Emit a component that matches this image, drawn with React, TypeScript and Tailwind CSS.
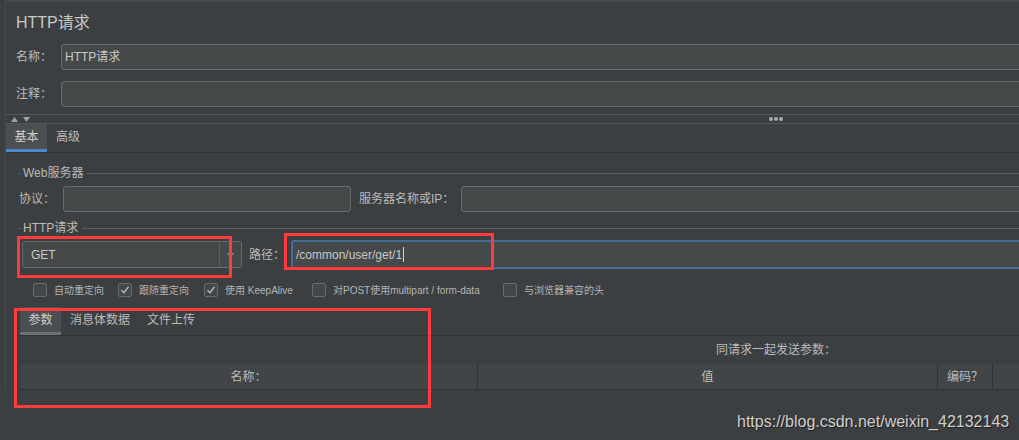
import React from "react";

const CHECKS = [
  { label: "自动重定向", checked: false, w: "w-[85px]" },
  { label: "跟随重定向", checked: true, w: "w-[86px]" },
  { label: "使用 KeepAlive", checked: true, w: "w-[108px]" },
  { label: "对POST使用multipart / form-data", checked: false, w: "w-[191px]" },
  { label: "与浏览器兼容的头", checked: false, w: "w-[120px]" },
];

function CheckBox({ checked }: { checked: boolean }) {
  return (
    <span className="flex h-[14px] w-[14px] shrink-0 items-center justify-center rounded-[2px] border border-[#6b6b6b] bg-[#43474a]">
      {checked && (
        <svg width="10" height="10" viewBox="0 0 10 10" fill="none">
          <path d="M1.5 5.2 L4 7.8 L8.6 1.8" stroke="#b8b8b8" strokeWidth="1.4" />
        </svg>
      )}
    </span>
  );
}

function GroupTitle({ title }: { title: string }) {
  return (
    <div className="flex h-[20px] items-center">
      <div className="h-px w-[3px] bg-[#5b5e60]" />
      <span className="ml-[2px] mr-[4px] text-[12px] text-[#bbbbbb]">{title}</span>
      <div className="h-px flex-1 bg-[#5b5e60]" />
    </div>
  );
}

export default function App() {
  return (
    <div className="relative h-[440px] w-[1019px] overflow-hidden bg-[#3c3f41] font-['Liberation_Sans','Noto_Sans_CJK_SC',sans-serif] text-[#bbbbbb]">
      <div className="ml-[5px] w-[1100px] shrink-0 border-l border-t-2 border-[#46494b]">
        {/* header */}
        <div className="flex h-[42px] items-center pl-[10px] text-[16px] text-[#c8c8c8]">HTTP请求</div>
        <div className="flex h-[26px] items-center">
          <span className="w-[55px] pl-[10px] text-[12px]">名称：</span>
          <div className="flex h-[26px] flex-1 items-center rounded-[3px] border border-[#686a6c] bg-[#45494a] pl-[3px] text-[12px] text-[#c8c8c8]">
            HTTP请求
          </div>
        </div>
        <div className="mt-[11px] flex h-[26px] items-center">
          <span className="w-[55px] pl-[10px] text-[12px]">注释：</span>
          <div className="h-[26px] flex-1 rounded-[3px] border border-[#686a6c] bg-[#45494a]" />
        </div>

        {/* split bar */}
        <div className="mt-[7px] flex h-[10px] items-center border-y border-[#55585a]">
          <div className="ml-[5px] flex gap-[5px]">
            <svg width="7" height="5" viewBox="0 0 7 5">
              <path d="M0 5 L3.5 0 L7 5 Z" fill="#a0a0a0" />
            </svg>
            <svg width="7" height="5" viewBox="0 0 7 5">
              <path d="M0 0 L7 0 L3.5 5 Z" fill="#a0a0a0" />
            </svg>
          </div>
          <div className="ml-[739px] flex gap-[1px]">
            <span className="h-[4px] w-[4px] rounded-full bg-[#a8a8a8]" />
            <span className="h-[4px] w-[4px] rounded-full bg-[#a8a8a8]" />
            <span className="h-[4px] w-[4px] rounded-full bg-[#a8a8a8]" />
          </div>
        </div>

        {/* tabs */}
        <div className="flex h-[29px] border-b border-[#313335] text-[12px]">
          <div className="flex w-[41px] flex-col bg-[#4b4f52]">
            <span className="flex flex-1 items-center justify-center text-[#cfcfcf]">基本</span>
            <div className="h-[3px] bg-[#4a88c7]" />
          </div>
          <span className="ml-[9px] flex items-center pb-[3px]">高级</span>
        </div>

        {/* content */}
        <div className="pl-[12px]">
          <div className="mt-[10px]">
            <GroupTitle title="Web服务器" />
          </div>
          <div className="mt-[3px] flex h-[26px] items-center text-[12px]">
            <span className="ml-[1px] w-[44px]">协议：</span>
            <div className="h-[26px] w-[288px] rounded-[3px] border border-[#686a6c] bg-[#45494a]" />
            <span className="ml-[8px] w-[102px]">服务器名称或IP：</span>
            <div className="h-[26px] flex-1 rounded-[3px] border border-[#686a6c] bg-[#45494a]" />
          </div>

          <div className="mt-[6px]">
            <GroupTitle title="HTTP请求" />
          </div>
          <div className="mt-[2px] flex h-[29px] items-center text-[12px]">
            <div className="ml-[4px] flex h-[27px] w-[220px] rounded-[3px] border border-[#686a6c] bg-[#45494a]">
              <span className="flex flex-1 items-center border-r border-[#5b5e60] pl-[8px] text-[#c8c8c8]">GET</span>
              <span className="flex w-[21px] items-center justify-center">
                <svg width="7" height="4" viewBox="0 0 7 4">
                  <path d="M0 0 L7 0 L3.5 4 Z" fill="#9a9a9a" />
                </svg>
              </span>
            </div>
            <span className="ml-[7px] w-[42px]">路径：</span>
            <div className="flex h-[29px] flex-1 items-center rounded-[3px] border-2 border-[#466d98] bg-[#45494a] pl-[3px] text-[#c8c8c8]">
              /common/user/get/1
              <span className="ml-[1px] h-[15px] w-px bg-[#d0d0d0]" />
            </div>
          </div>

          <div className="mt-[13px] flex h-[16px] items-center pl-[15px] text-[10px]">
            {CHECKS.map((c) => (
              <div key={c.label} className={`flex items-center ${c.w}`}>
                <CheckBox checked={c.checked} />
                <span className="ml-[7px] whitespace-nowrap text-[#b4b4b4]">{c.label}</span>
              </div>
            ))}
          </div>

          {/* params tabs */}
          <div className="ml-[2px] mt-[9px] flex h-[29px] border-b border-[#2f3133] text-[12px]">
            <div className="flex w-[41px] flex-col bg-[#4b4f52]">
              <span className="flex flex-1 items-center justify-center text-[#cfcfcf]">参数</span>
              <div className="h-[3px] bg-[#6d7174]" />
            </div>
            <span className="ml-[9px] flex items-center pb-[3px]">消息体数据</span>
            <span className="ml-[17px] flex items-center pb-[3px]">文件上传</span>
          </div>

          <div className="ml-[2px] flex h-[28px] items-center pl-[696px] text-[12px]">同请求一起发送参数：</div>

          <div className="ml-[2px] flex h-[26px] border-b border-[#2f3133] bg-[#414548] text-[12px]">
            <span className="flex w-[458px] items-center justify-center border-r border-[#2f3133]">名称：</span>
            <span className="flex w-[460px] items-center justify-center border-r border-[#2f3133]">值</span>
            <span className="flex w-[55px] items-center justify-center border-r border-[#2f3133]">编码？</span>
            <span className="flex-1" />
          </div>
        </div>
      </div>

      {/* annotations */}
      <div className="absolute left-[17px] top-[236px] h-[42px] w-[215px] border-[3px] border-[#ff3b3b]" />
      <div className="absolute left-[284px] top-[233px] h-[37px] w-[210px] border-[3px] border-[#ff3b3b]" />
      <div className="absolute left-[14px] top-[308px] h-[100px] w-[417px] border-[3px] border-[#ff3b3b]" />

      <div className="absolute left-[737px] top-[410px] text-[16px] text-[#cfcfcf] [text-shadow:1px_1px_1px_#1e1e1e]">
        https://blog.csdn.net/weixin_42132143
      </div>
    </div>
  );
}
